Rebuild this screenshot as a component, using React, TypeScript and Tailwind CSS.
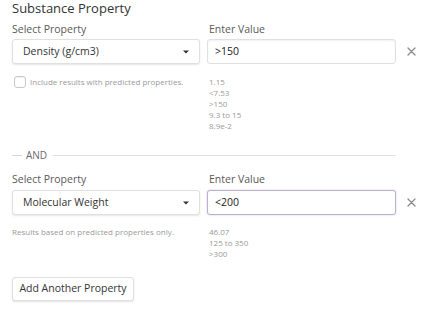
import React from 'react';

type Row = {
  property: string;
  value: string;
  focused?: boolean;
  note: React.ReactNode;
  examples: string[];
};

const ROWS: Row[] = [
  {
    property: 'Density (g/cm3)',
    value: '>150',
    note: (
      <label className="flex items-center gap-[4px] pl-[2px]">
        <span className="w-[12px] h-[12px] rounded-[3px] border border-[#c8c8c8] bg-white shadow-[inset_0_1px_1px_rgba(0,0,0,0.06)]" />
        <span>Include results with predicted properties.</span>
      </label>
    ),
    examples: ['1.15', '<7.53', '>150', '9.3 to 15', '8.9e-2'],
  },
  {
    property: 'Molecular Weight',
    value: '<200',
    focused: true,
    note: <span className="leading-[11px]">Results based on predicted properties only.</span>,
    examples: ['46.07', '125 to 350', '>300'],
  },
];

function Caret() {
  return (
    <svg width="6" height="4" viewBox="0 0 6 4" className="shrink-0">
      <path d="M0 0.5h6L3 3.5z" fill="#333" />
    </svg>
  );
}

function CloseIcon() {
  return (
    <svg width="9" height="9" viewBox="0 0 9 9">
      <path d="M1 1l7 7M8 1L1 8" stroke="#8a8a8a" strokeWidth="1.3" strokeLinecap="round" />
    </svg>
  );
}

function PropertyRow({ row, first }: { row: Row; first: boolean }) {
  return (
    <div className={`flex items-start ${first ? 'mt-[6px]' : 'mt-[11px]'}`}>
      <div className="w-[188px]">
        <div className="text-[10.5px] leading-[14px] text-[#5a5a5a]">Select Property</div>
        <div
          className={`${first ? 'mt-[3px]' : 'mt-[4px]'} h-[25px] flex items-center justify-between pl-[10px] pr-[10px] rounded-[3px] border border-[#e0e0e0] bg-white shadow-[0_1px_2px_rgba(0,0,0,0.1)] text-[10.5px] text-[#333]`}
        >
          <span>{row.property}</span>
          <Caret />
        </div>
        <div className={`${first ? 'mt-[12px]' : 'mt-[11px]'} text-[8px] text-[#9a9a9a]`}>{row.note}</div>
      </div>

      <div className="w-[189px] ml-[7px]">
        <div className="pl-[2px] text-[10.5px] leading-[14px] text-[#5a5a5a]">Enter Value</div>
        <div
          className={`${first ? 'mt-[3px]' : 'mt-[4px]'} h-[25px] flex items-center pl-[7px] rounded-[3px] bg-white text-[10.5px] text-[#222] ${
            row.focused
              ? 'border border-[#bfaed0] shadow-[0_0_2px_rgba(120,80,160,0.35)]'
              : 'border border-[#e0e0e0] shadow-[inset_0_1px_2px_rgba(0,0,0,0.06)]'
          }`}
        >
          {row.value}
        </div>
        <div className={`${first ? 'mt-[12px]' : 'mt-[11px]'} pl-[2px] text-[8px] leading-[11px] text-[#9a9a9a]`}>
          {row.examples.map((ex) => (
            <div key={ex}>{ex}</div>
          ))}
        </div>
      </div>

      <button className={`ml-[11px] ${first ? 'mt-[25px]' : 'mt-[26px]'} flex items-center`}>
        <CloseIcon />
      </button>
    </div>
  );
}

export default function App() {
  return (
    <div className="w-[428px] h-[310px] bg-white pl-[12px] overflow-hidden font-['Open_Sans',sans-serif]">
      <h2 className="text-[13px] leading-[16px] text-[#333]">Substance Property</h2>

      <PropertyRow row={ROWS[0]} first />

      {/* AND separator */}
      <div className="mt-[18px] h-[12px] w-[384px] flex items-center gap-[4px]">
        <div className="w-[10px] h-px bg-[#d6d6d6]" />
        <span className="text-[10px] text-[#6a6a6a] leading-[12px]">AND</span>
        <div className="flex-1 h-px bg-[#e2e2e2] ml-[2px]" />
      </div>

      <PropertyRow row={ROWS[1]} first={false} />

      <button className="mt-[18px] h-[24px] w-[122px] rounded-[3px] border border-[#e0e0e0] bg-white shadow-[0_1px_2px_rgba(0,0,0,0.12)] text-[10.5px] text-[#333]">
        Add Another Property
      </button>
    </div>
  );
}
